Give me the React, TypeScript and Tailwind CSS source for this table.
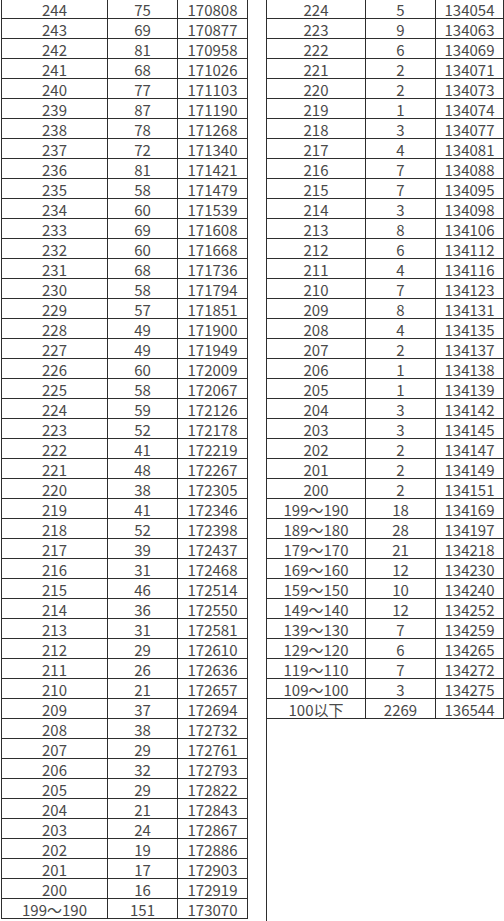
import React from "react";

type Row = [string, string, string];

const left: Row[] = [
  ["244", "75", "170808"],
  ["243", "69", "170877"],
  ["242", "81", "170958"],
  ["241", "68", "171026"],
  ["240", "77", "171103"],
  ["239", "87", "171190"],
  ["238", "78", "171268"],
  ["237", "72", "171340"],
  ["236", "81", "171421"],
  ["235", "58", "171479"],
  ["234", "60", "171539"],
  ["233", "69", "171608"],
  ["232", "60", "171668"],
  ["231", "68", "171736"],
  ["230", "58", "171794"],
  ["229", "57", "171851"],
  ["228", "49", "171900"],
  ["227", "49", "171949"],
  ["226", "60", "172009"],
  ["225", "58", "172067"],
  ["224", "59", "172126"],
  ["223", "52", "172178"],
  ["222", "41", "172219"],
  ["221", "48", "172267"],
  ["220", "38", "172305"],
  ["219", "41", "172346"],
  ["218", "52", "172398"],
  ["217", "39", "172437"],
  ["216", "31", "172468"],
  ["215", "46", "172514"],
  ["214", "36", "172550"],
  ["213", "31", "172581"],
  ["212", "29", "172610"],
  ["211", "26", "172636"],
  ["210", "21", "172657"],
  ["209", "37", "172694"],
  ["208", "38", "172732"],
  ["207", "29", "172761"],
  ["206", "32", "172793"],
  ["205", "29", "172822"],
  ["204", "21", "172843"],
  ["203", "24", "172867"],
  ["202", "19", "172886"],
  ["201", "17", "172903"],
  ["200", "16", "172919"],
  ["199～190", "151", "173070"],
];

const right: Row[] = [
  ["224", "5", "134054"],
  ["223", "9", "134063"],
  ["222", "6", "134069"],
  ["221", "2", "134071"],
  ["220", "2", "134073"],
  ["219", "1", "134074"],
  ["218", "3", "134077"],
  ["217", "4", "134081"],
  ["216", "7", "134088"],
  ["215", "7", "134095"],
  ["214", "3", "134098"],
  ["213", "8", "134106"],
  ["212", "6", "134112"],
  ["211", "4", "134116"],
  ["210", "7", "134123"],
  ["209", "8", "134131"],
  ["208", "4", "134135"],
  ["207", "2", "134137"],
  ["206", "1", "134138"],
  ["205", "1", "134139"],
  ["204", "3", "134142"],
  ["203", "3", "134145"],
  ["202", "2", "134147"],
  ["201", "2", "134149"],
  ["200", "2", "134151"],
  ["199～190", "18", "134169"],
  ["189～180", "28", "134197"],
  ["179～170", "21", "134218"],
  ["169～160", "12", "134230"],
  ["159～150", "10", "134240"],
  ["149～140", "12", "134252"],
  ["139～130", "7", "134259"],
  ["129～120", "6", "134265"],
  ["119～110", "7", "134272"],
  ["109～100", "3", "134275"],
  ["100以下", "2269", "136544"],
];

function Cell({ children, w }: { children: React.ReactNode; w: string }) {
  return (
    <div
      className={`${w} h-full border-r border-[#2e2e2e] flex items-center justify-center pt-[3px] whitespace-nowrap`}
    >
      {children}
    </div>
  );
}

export default function App() {
  return (
    <div
      className="w-[504px] h-[921px] overflow-hidden bg-white text-[15px] text-[#4a4a4a]"
      style={{ fontFamily: '"Noto Sans CJK SC", "Noto Sans", sans-serif' }}
    >
      <div className="flex -mt-px h-[922px]">
        <div className="ml-px border-l border-[#2e2e2e] self-start">
          {left.map((r, i) => (
            <div key={i} className="flex h-5 border-b border-[#2e2e2e] leading-5">
              <Cell w="w-[106px]">{r[0]}</Cell>
              <Cell w="w-[70px]">{r[1]}</Cell>
              <Cell w="w-[70px]">{r[2]}</Cell>
            </div>
          ))}
        </div>
        <div className="ml-[18px] border-l border-[#2e2e2e] h-full">
          {right.map((r, i) => (
            <div key={i} className="flex h-5 border-b border-[#2e2e2e] leading-5">
              <Cell w="w-[99px]">{r[0]}</Cell>
              <Cell w="w-[70px]">{r[1]}</Cell>
              <Cell w="w-[68px]">{r[2]}</Cell>
            </div>
          ))}
        </div>
      </div>
    </div>
  );
}
